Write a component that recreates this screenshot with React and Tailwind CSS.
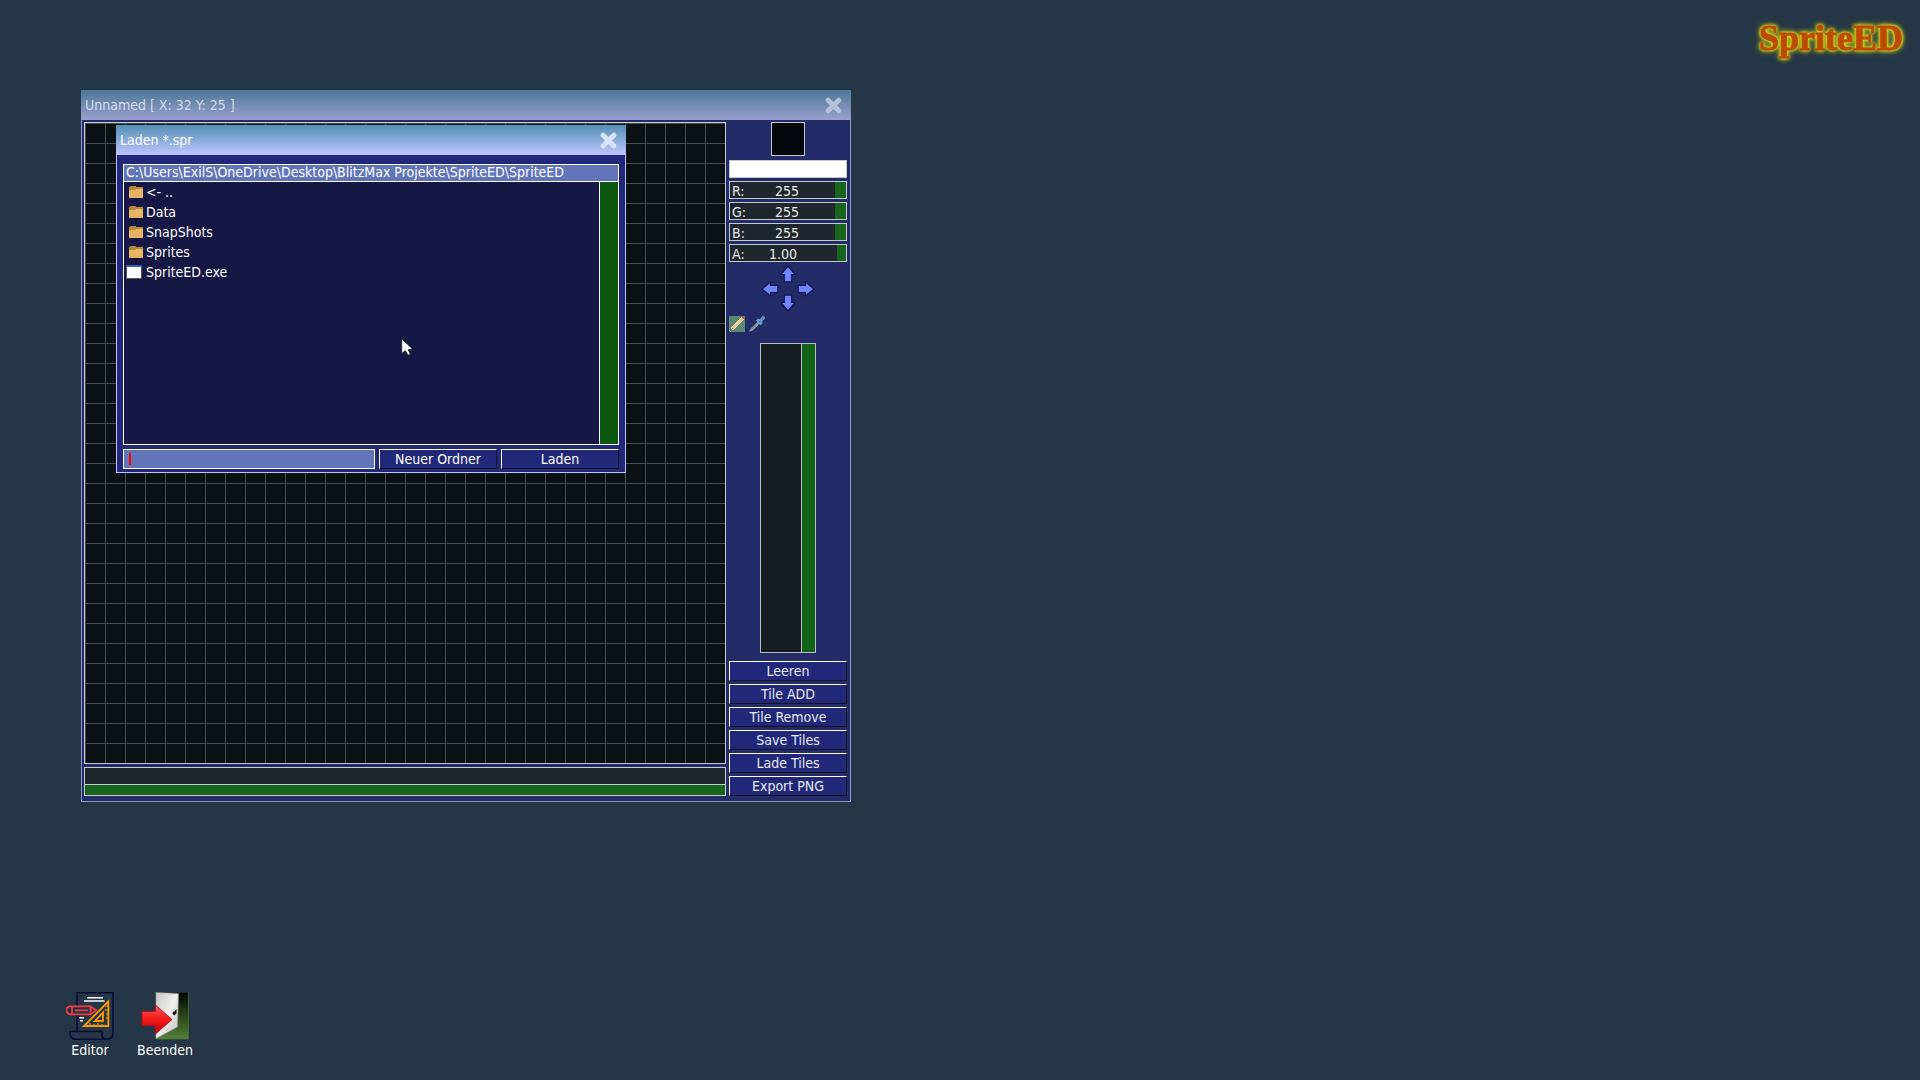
import { useState } from 'react'
import clsx from 'clsx'

const FOLDERS = ['<- ..', 'Data', 'SnapShots', 'Sprites']
const ACTIONS = ['Leeren', 'Tile ADD', 'Tile Remove', 'Save Tiles', 'Lade Tiles', 'Export PNG']

function CloseIcon({ className }) {
  return (
    <svg viewBox="0 0 17 17" className={clsx('w-[17px] h-[17px]', className)} aria-hidden="true">
      <path d="M3.2 3.2 13.8 13.8M13.8 3.2 3.2 13.8" stroke="currentColor" strokeWidth="5" strokeLinecap="round" />
    </svg>
  )
}

function FolderIcon() {
  return (
    <svg viewBox="0 0 14 12" className="w-[14px] h-3" aria-hidden="true">
      <path d="M0 1h1V0h6v1h7v11H0z" fill="#b5883c" />
      <path d="M0 4h6l1-1h7v9H0z" fill="#e6b664" />
    </svg>
  )
}

function FileIcon() {
  return (
    <svg viewBox="0 0 16 14" className="w-4 h-[14px]" aria-hidden="true">
      <path d="M0 0h16v14H0z" fill="#55585f" />
      <path d="M0 0h16v2H0z" fill="#2c62a8" />
      <path d="M1 2h14v11H1z" fill="#fff" />
    </svg>
  )
}

function ArrowIcon({ className }) {
  return (
    <svg viewBox="0 0 16 18" className={clsx('w-4 h-[18px]', className)} aria-hidden="true">
      <path d="M8 1 15 9.5H11.7V16.8H4.3V9.5H1z" fill="#6f86ff" stroke="#121650" strokeWidth="1.2" />
    </svg>
  )
}

function PencilIcon() {
  return (
    <svg viewBox="0 0 16 16" className="w-4 h-4 bg-[#5b866f]" aria-hidden="true">
      <path d="M1.5 14.5 3 11 13 1 15 3 5 13z" fill="#f3c583" stroke="#f7ecd2" strokeWidth="1" />
      <path d="M12.5 1.5 14 .5 15.5 2 14.5 3.5z" fill="#e8492e" />
      <path d="M1 13h2v2H1zM3 12h1v1H3z" fill="#777" />
      <path d="M1 15h1v1H1zM0 14h1v1H0z" fill="#ddd" />
    </svg>
  )
}

function PipetteIcon() {
  return (
    <svg viewBox="0 0 16 16" className="w-4 h-4" aria-hidden="true">
      <path d="M.7 15.3 2 12.5 9 5.5 10.8 7.2 3.8 14.2z" fill="#8c8f96" stroke="#c3c7cc" strokeWidth=".7" strokeDasharray="1 1" />
      <path d="M7.5 4.5 9 3l2 .5L13.5.5 15.5 1v1.7L12.8 5.3 13.2 7.5 11.5 9z" fill="#5e95cd" stroke="#9bb9d8" strokeWidth=".5" />
    </svg>
  )
}

function EditorIcon() {
  return (
    <svg viewBox="0 0 48 48" className="w-12 h-12" fill="none" aria-hidden="true">
      <g stroke="#07083a" strokeWidth="1.5">
        <path d="M11 15V.8h36v39" />
        <path d="M11 22v17M3.8 39.5H36v3.2c0 2.7 2 4.6 5 4.6H9.5c-4 0-5.7-3-5.7-7.8zM41 47.3c3.8 0 6-2.4 6-7.5" />
      </g>
      <path d="M21 5.7h16M18 9h20.5M13 25.7h5M14 28.7h3" stroke="#fff" strokeWidth="1.5" />
      <g stroke="#ff9800" strokeWidth="1.8">
        <path d="M42.3 9.5v24.5H18z" />
        <path d="M37 20.5v8.5h-8z" />
        <path d="M38.5 14h3.5M38.5 18h3.5M40 22h2M40 26h2M24 34v-3M28 34v-2M32 34v-3M36 34v-2" strokeWidth="1.2" />
      </g>
      <path d="M5 14.3h19.5l5.5 4-5.5 4H5c-6 0-6-8 0-8zM6 14.3v8M24.5 14.3v8M9 18.3h13" fill="#253746" stroke="#f23a42" strokeWidth="1.8" />
    </svg>
  )
}

function ExitIcon() {
  return (
    <svg viewBox="0 0 48 48" className="w-12 h-12" aria-hidden="true">
      <defs>
        <linearGradient id="doorway" x1="0" y1="0" x2="0" y2="1">
          <stop offset="0" stopColor="#000" />
          <stop offset=".35" stopColor="#1b3310" />
          <stop offset="1" stopColor="#568138" />
        </linearGradient>
        <linearGradient id="door" x1="0" y1="0" x2="1" y2="1">
          <stop offset="0" stopColor="#c9cac8" />
          <stop offset=".5" stopColor="#eeeeec" />
          <stop offset="1" stopColor="#bdbebb" />
        </linearGradient>
        <linearGradient id="exit-arrow" x1="0" y1="0" x2="0" y2="1">
          <stop offset="0" stopColor="#ff5b5b" />
          <stop offset=".5" stopColor="#f01717" />
          <stop offset="1" stopColor="#c40008" />
        </linearGradient>
      </defs>
      <path d="M15 0h32.5v47H15z" fill="url(#doorway)" />
      <path d="M15 0h32.5v47H15z" fill="none" stroke="#466b3a" strokeWidth=".8" />
      <path d="M15 .5 37.5 1.5 36.5 35 15 46.5z" fill="url(#door)" stroke="#8e918e" strokeWidth=".6" />
      <path d="M31.5 21.5a2 2 0 0 1 2-2l2-2.5v4.5l-2.5 2z" fill="#111" />
      <path d="M1 19.5h13.5V13L31 27.5 14.5 42v-8.5H1z" fill="url(#exit-arrow)" stroke="#b20c12" strokeWidth=".8" />
    </svg>
  )
}

function TitleBar({ title, className, iconClassName }) {
  return (
    <header className={clsx('flex h-[30px] items-center justify-between pl-1 pr-[9px] bg-linear-to-b', className)}>
      <h2>{title}</h2>
      <button type="button" aria-label="Schließen">
        <CloseIcon className={iconClassName} />
      </button>
    </header>
  )
}

function PushButton({ children, className }) {
  return (
    <button
      type="button"
      className={clsx(
        'h-5 border border-t-white border-l-white border-r-[#14141c] border-b-[#14141c] bg-[#21287a] text-center leading-[18px]',
        className
      )}
    >
      {children}
    </button>
  )
}

function ColorSlider({ name, max, step, display, thumb, valueClassName }) {
  const [value, setValue] = useState(max)
  const id = `slider-${name}`

  return (
    <div className="grid h-[18px] border border-[#c4c8c8] bg-[#20262d] leading-[18px]">
      <input
        id={id}
        type="range"
        min="0"
        max={max}
        step={step}
        value={value}
        onChange={(e) => setValue(Number(e.target.value))}
        className={clsx(
          'col-start-1 row-start-1 h-4 w-full min-w-0 appearance-none bg-transparent [&::-webkit-slider-thumb]:h-4 [&::-webkit-slider-thumb]:appearance-none [&::-webkit-slider-thumb]:bg-[#17641e]',
          thumb
        )}
      />
      <div className="pointer-events-none col-start-1 row-start-1 grid h-4 pl-[2px]">
        <label htmlFor={id} className="col-start-1 row-start-1">{name}:</label>
        <output htmlFor={id} className={clsx('col-start-1 row-start-1 text-center', valueClassName)}>
          {display(value)}
        </output>
      </div>
    </div>
  )
}

function ToolPanel() {
  return (
    <aside className="flex w-[118px] flex-col">
      <div className="size-[34px] self-center border border-[#c4c8c8] bg-[#04070c]" />
      <div className="mt-1 h-[18px] border border-[#c4c8c8] bg-white" />

      <div className="mt-[3px] flex flex-col gap-[3px]">
        {['R', 'G', 'B'].map((name) => (
          <ColorSlider
            key={name}
            name={name}
            max={255}
            step={1}
            display={(v) => v}
            thumb="[&::-webkit-slider-thumb]:w-[11px]"
            valueClassName="pr-1"
          />
        ))}
        <ColorSlider
          name="A"
          max={1}
          step={0.01}
          display={(v) => v.toFixed(2)}
          thumb="[&::-webkit-slider-thumb]:w-[9px]"
          valueClassName="pr-3"
        />
      </div>

      {/* Shift the sprite by one pixel */}
      <div className="mt-[3px] flex items-center justify-center gap-[2px]">
        <button type="button" aria-label="Links"><ArrowIcon className="-rotate-90" /></button>
        <div className="flex flex-col gap-[11px]">
          <button type="button" aria-label="Hoch"><ArrowIcon /></button>
          <button type="button" aria-label="Runter"><ArrowIcon className="rotate-180" /></button>
        </div>
        <button type="button" aria-label="Rechts"><ArrowIcon className="rotate-90" /></button>
      </div>

      <div className="mt-1 flex gap-1">
        <button type="button" aria-label="Stift"><PencilIcon /></button>
        <button type="button" aria-label="Pipette"><PipetteIcon /></button>
      </div>

      <div className="mt-[11px] mb-2 flex w-14 flex-1 self-center border border-[#b9bdbf]">
        <div className="flex-1 bg-[#181c23]" />
        <div className="w-[14px] border-l border-[#b9bdbf] bg-[#126218]" />
      </div>

      <div className="flex flex-col gap-[3px]">
        {ACTIONS.map((label) => (
          <PushButton key={label}>{label}</PushButton>
        ))}
      </div>
    </aside>
  )
}

function EditorWindow() {
  return (
    <section className="absolute left-[81px] top-[90px] w-[770px] text-white/90">
      <TitleBar
        title="Unnamed [ X: 32 Y: 25 ]"
        className="from-[#4b7896] to-[#9a9fd0] text-[#d0d9e6]"
        iconClassName="text-[#b4c1d8]"
      />
      <div className="flex gap-[3px] border border-t-0 border-[#8f9bc8] bg-[#232c68] pt-[2px] pr-[3px] pb-[5px] pl-[2px]">
        <div className="flex flex-1 flex-col gap-[3px]">
          <div className="aspect-square border border-[#c8cccc] bg-[#0c1115] bg-[linear-gradient(to_right,#484c4e_1px,transparent_1px),linear-gradient(to_bottom,#484c4e_1px,transparent_1px)] bg-size-[20px_20px]" />
          <div className="border border-[#c8cccc]">
            <div className="h-4 bg-[#1f242b]" />
            <div className="h-[11px] border-t border-[#c8cccc] bg-[#17641e]" />
          </div>
        </div>
        <ToolPanel />
      </div>
    </section>
  )
}

function LoadDialog() {
  const [fileName, setFileName] = useState('')

  return (
    <section role="dialog" aria-label="Laden" className="absolute left-[116px] top-[125px] w-[510px] text-white">
      <TitleBar title="Laden *.spr" className="from-[#5190b4] to-[#bec5ff]" iconClassName="text-[#d9e4f8]" />
      <div className="border border-t-0 border-[#bcc4fb] bg-[#21287a] px-[6px] pt-[9px] pb-[3px]">
        <p className="h-[18px] border border-white bg-[#6275b8] px-[2px] leading-[14px]">
          {'C:\\Users\\ExilS\\OneDrive\\Desktop\\BlitzMax Projekte\\SpriteED\\SpriteED'}
        </p>
        <div className="flex h-[263px] border border-t-0 border-white bg-[#161744]">
          <ul className="flex-1">
            {FOLDERS.map((name) => (
              <li key={name}>
                <button type="button" className="flex h-5 items-center gap-[3px] pl-[5px]">
                  <FolderIcon />
                  {name}
                </button>
              </li>
            ))}
            <li>
              <button type="button" className="flex h-5 items-center gap-1 pl-[2px]">
                <FileIcon />
                SpriteED.exe
              </button>
            </li>
          </ul>
          <div className="w-[19px] border-l border-white bg-[#0d570e]" />
        </div>
        <div className="mt-1 flex gap-1">
          <div className="flex h-5 flex-1 items-center border border-white bg-[#6275b8] pl-[5px]">
            <span className="h-3 w-[2px] bg-[#ff0000]" />
            <input
              type="text"
              aria-label="Dateiname"
              value={fileName}
              onChange={(e) => setFileName(e.target.value)}
              className="h-full min-w-0 flex-1 bg-transparent outline-none"
            />
          </div>
          <PushButton className="w-[118px]">Neuer Ordner</PushButton>
          <PushButton className="w-[118px]">Laden</PushButton>
        </div>
      </div>
    </section>
  )
}

export default function App() {
  return (
    <main className="relative flex min-h-screen flex-col justify-between overflow-hidden bg-[#253746] font-['DejaVu_Sans_Condensed','DejaVu_Sans',sans-serif] text-[14px] leading-5">
      <header className="flex justify-end pt-4 pr-[17px]">
        <h1 className="font-['Liberation_Serif',serif] text-[36px] leading-[44px] font-bold text-[#bc4a00] [-webkit-text-stroke:1px_#bc4a00] [text-shadow:0_0_2px_#e4e418,0_0_3px_#e4e418,0_0_4px_#dede18,0_0_5px_#d6d81c,0_0_7px_#c8cc20]">
          SpriteED
        </h1>
      </header>

      <EditorWindow />
      <LoadDialog />

      <nav className="flex gap-[15px] pb-5 pl-[60px] text-white">
        <button type="button" className="flex w-[60px] flex-col items-center">
          <EditorIcon />
          Editor
        </button>
        <button type="button" className="flex w-[60px] flex-col items-center">
          <ExitIcon />
          Beenden
        </button>
      </nav>

      {/* Mouse pointer */}
      <svg viewBox="0 0 12 18" className="absolute left-[401px] top-[338px] h-[18px] w-3" aria-hidden="true">
        <path d="M.8 1v14.5l3.5-3 2.7 4.7 2.3-1.2-2.3-4.2 4.5-.8z" fill="#fff" stroke="#111" strokeWidth=".6" />
      </svg>
    </main>
  )
}
